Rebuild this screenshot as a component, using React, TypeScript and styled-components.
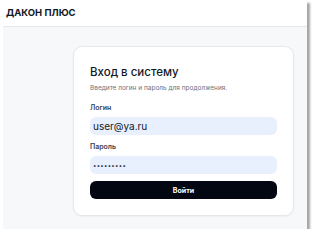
import styled, { createGlobalStyle } from 'styled-components';

const Global = createGlobalStyle`
  html, body {
    margin: 0;
    background: #fff;
    font-family: Inter, "Noto Sans", sans-serif;
  }
`;

const Frame = styled.div`
  margin-left: 3px;
  width: 304px;
  height: 229px;
  background: #f7f8fa;
  box-shadow: 3px 3px 2px rgba(0, 0, 0, 0.35);
  display: flex;
  flex-direction: column;
  overflow: hidden;
`;

const Header = styled.header`
  height: 25px;
  flex-shrink: 0;
  background: #fff;
  border-bottom: 1px solid #e5e7eb;
  display: flex;
  align-items: center;
  padding: 0 0 2px 3px;
  box-sizing: border-box;
  height: 27px;
  font-size: 9.5px;
  font-weight: 700;
  color: #111827;
`;

const Main = styled.main`
  flex: 1;
  padding: 19px 13px 0 70px;
`;

const Card = styled.div`
  background: #fff;
  border: 1px solid #e5e7eb;
  border-radius: 9px;
  padding: 17px 16px 16px;
  box-shadow: 0 1px 2px rgba(0, 0, 0, 0.04);
`;

const Title = styled.h1`
  margin: 0;
  font-size: 11.5px;
  line-height: 16px;
  font-weight: 500;
  color: #111827;
`;

const Subtitle = styled.p`
  margin: 4px 0 12px;
  font-size: 6.5px;
  line-height: 8px;
  color: #6b7280;
`;

const Label = styled.label`
  display: block;
  font-size: 7px;
  line-height: 8px;
  font-weight: 600;
  color: #374151;
  margin-bottom: 5px;
`;

const Field = styled.div`
  margin-bottom: 8px;
`;

const Input = styled.div<{ $secret?: boolean }>`
  height: 18px;
  border-radius: 6px;
  background: #e8f0fe;
  display: flex;
  align-items: center;
  padding: 0 3px;
  font-size: ${p => (p.$secret ? '6px' : '10px')};
  color: #111827;
  letter-spacing: ${p => (p.$secret ? '0.3px' : '0')};
`;

const Button = styled.button`
  display: block;
  width: 100%;
  height: 18px;
  border: none;
  border-radius: 6px;
  background: #030712;
  color: #fff;
  font-family: inherit;
  font-size: 7px;
  font-weight: 700;
  margin-top: -1px;
`;

export default function App() {
  return (
    <>
      <Global />
      <Frame>
        <Header>ДАКОН ПЛЮС</Header>
        <Main>
          <Card>
            <Title>Вход в систему</Title>
            <Subtitle>Введите логин и пароль для продолжения.</Subtitle>
            <Field>
              <Label>Логин</Label>
              <Input>user@ya.ru</Input>
            </Field>
            <Field>
              <Label>Пароль</Label>
              <Input $secret>•••••••••</Input>
            </Field>
            <Button>Войти</Button>
          </Card>
        </Main>
      </Frame>
    </>
  );
}
